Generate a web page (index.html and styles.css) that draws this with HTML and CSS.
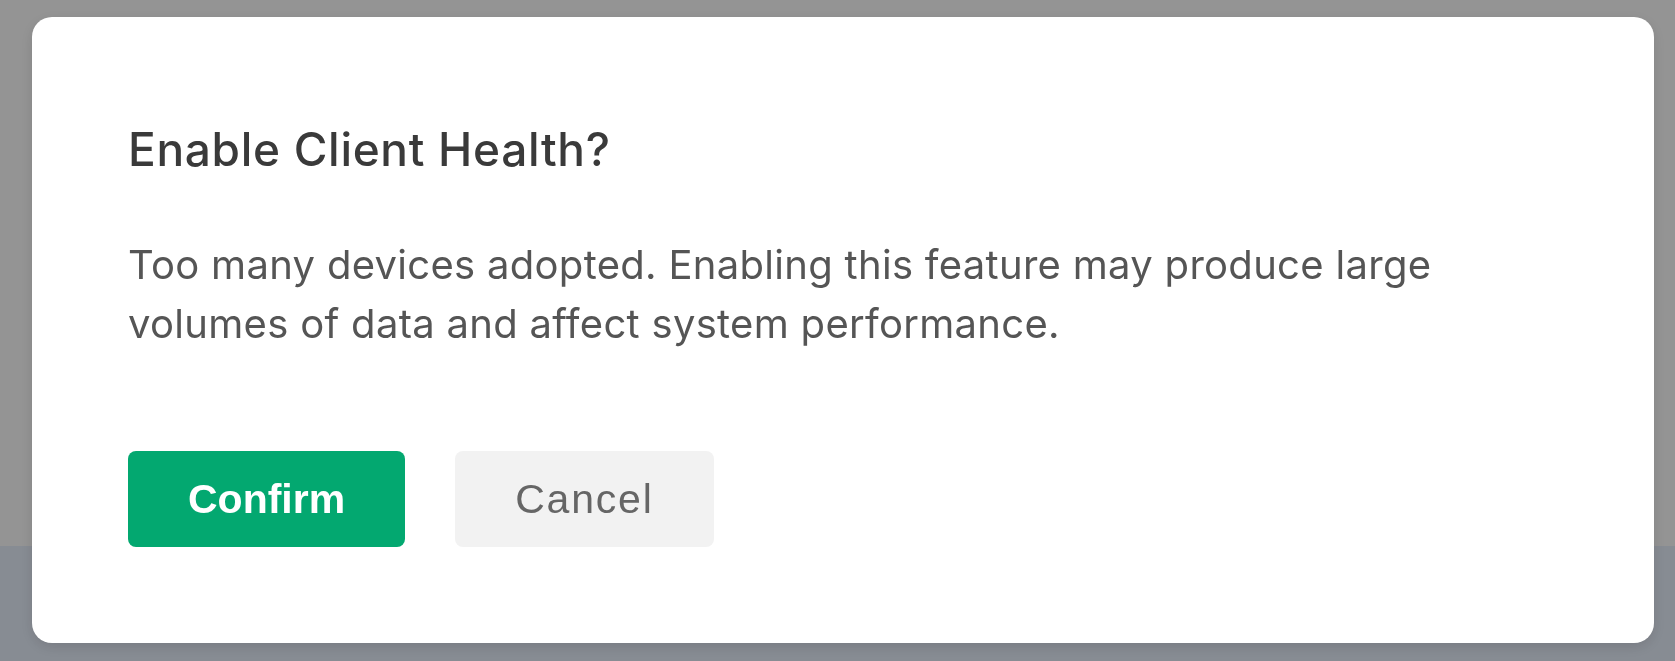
FILE: index.html
```html
<!DOCTYPE html>
<html lang="en">
<head>
  <meta charset="UTF-8">
  <meta name="viewport" content="width=device-width, initial-scale=1.0">
  <title>Enable Client Health</title>
  <link rel="stylesheet" href="styles.css">
</head>
<body>

<div class="page">
  <div class="page-top"></div>
  <div class="page-bottom"></div>
</div>

<div class="overlay">
  <div class="dialog">
    <h2 class="dialog-title">Enable Client Health?</h2>
    <p class="dialog-text">Too many devices adopted. Enabling this feature may produce large volumes of data and affect system performance.</p>
    <div class="dialog-actions">
      <button class="button button-primary" id="confirm-button">Confirm</button>
      <button class="button button-secondary" id="cancel-button">Cancel</button>
    </div>
  </div>
</div>

</body>
</html>
```

FILE: styles.css
```css
html, body {
  margin: 0;
  padding: 0;
  height: 100%;
}
body {
  font-family: Inter, "Noto Sans", sans-serif;
  overflow: hidden;
}
.page {
  display: flex;
  flex-direction: column;
  height: 100%;
}
.page-top {
  height: 546px;
  background-color: #fff;
}
.page-bottom {
  flex: 1;
  background-color: #e9f1fd;
}
.overlay {
  position: fixed;
  inset: 0;
  background-color: rgba(0, 0, 0, 0.42);
  padding: 17px 21px 18px 32px;
  display: flex;
}
.dialog {
  flex: 1;
  background-color: #fff;
  border-radius: 20px;
  box-shadow: 0 4px 14px rgba(0, 0, 0, 0.12);
  padding: 102px 96px 96px 96px;
  box-sizing: border-box;
}
.dialog-title {
  margin: 0;
  font-size: 46px;
  line-height: 60px;
  font-weight: 500;
  color: #3a3a3a;
  letter-spacing: 0.015em;
}
.dialog-text {
  margin: 56px 0 0 0;
  font-size: 40px;
  line-height: 59px;
  color: #555;
  letter-spacing: 0.3px;
}
.dialog-actions {
  display: flex;
  gap: 50px;
  margin-top: 98px;
}
.button {
  height: 96px;
  padding: 0 60px;
  border: none;
  border-radius: 8px;
  font-family: "Liberation Sans", Arial, sans-serif;
  font-size: 41px;
  cursor: pointer;
}
.button-primary {
  background-color: #03a870;
  color: #fff;
  font-weight: bold;
}
.button-secondary {
  background-color: #f2f2f2;
  color: #666;
  letter-spacing: 1.8px;
}
```
